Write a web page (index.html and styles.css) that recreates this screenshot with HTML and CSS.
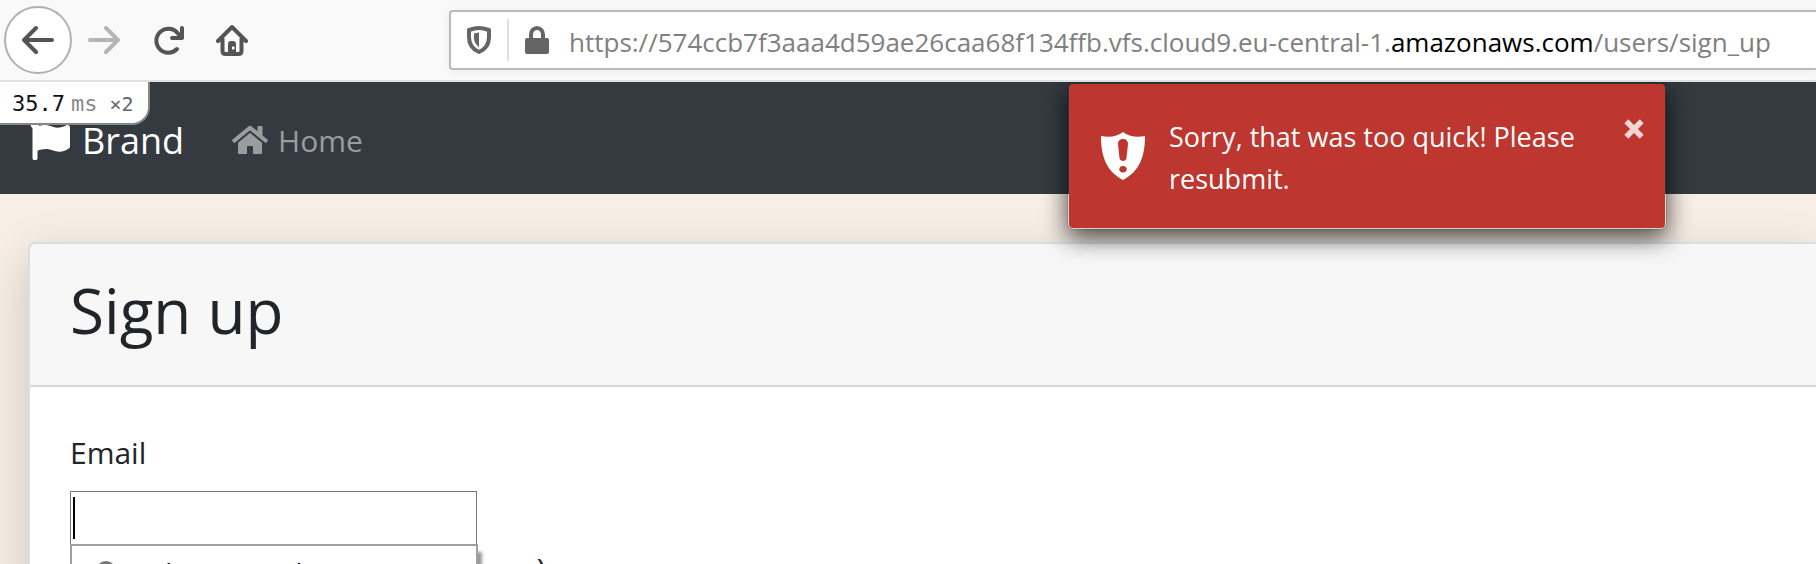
FILE: index.html
```html
<!DOCTYPE html>
<html lang="en">
<head>
<meta charset="utf-8">
<title>Sign up</title>
<link rel="stylesheet" href="styles.css">
</head>
<body>
<header class="toolbar">
  <nav class="toolbar-nav" aria-label="Browser">
    <button class="tool back" type="button" aria-label="Back"><svg viewBox="0 0 32 32"><path d="M30 16H2M14 4L2 16l12 12"/></svg></button>
    <button class="tool forward" type="button" aria-label="Forward" disabled><svg viewBox="0 0 32 32"><path d="M2 16h28M18 4l12 12-12 12"/></svg></button>
    <button class="tool" type="button" aria-label="Reload"><svg viewBox="0 0 32 32"><path d="M25 25A12 12 0 1 1 26 9.500L28 12M30 4v10H20"/></svg></button>
    <button class="tool" type="button" aria-label="Home"><svg viewBox="0 0 32 32"><path d="M2 17L16 3l14 14M6.500 15v12q0 3 3 3h13q3 0 3-3V15"/><path class="solid" fill-rule="evenodd" d="M12 30V20q0-3 3-3h2q3 0 3 3v10zM16 22.500v3h2.500v-3z"/></svg></button>
  </nav>
  <div class="address">
    <svg class="shield" viewBox="0 0 24 28"><path class="ring" d="M12 2C9 2 5 3 2 4v7c0 7 4 12.500 10 15 6-2.500 10-8 10-15V4c-3-1-7-2-10-2z"/><path d="M12 6.500L7 7.500V12c0 4 2 7 5 9z"/></svg>
    <span class="divider"></span>
    <svg class="lock" viewBox="0 0 24 28"><path class="ring" d="M6 14V8.500a6 6.500 0 0 1 12 0V14"/><rect y="12" width="24" height="16" rx="2"/></svg>
    <span class="url">https://574ccb7f3aaa4d59ae26caa68f134ffb.vfs.cloud9.eu-central-1.<b>amazonaws.com</b>/users/sign_up</span>
  </div>
</header>
<div class="page">
  <div class="profiler"><span class="time">35.7</span><span class="unit">ms</span><span class="count">×2</span></div>
  <nav class="navbar">
    <a class="brand" href="#"><svg viewBox="0 0 512 512"><path d="M350 99C296 99 252 64 184 64c-25 0-47 4-68 12a56 56 0 0 0 4-24C118 24 95 1 66 0 34-1 8 24 8 56c0 19 9 36 24 46v386a24 24 0 0 0 24 24h16a24 24 0 0 0 24-24v-94c28-12 64-22 114-22 54 0 98 34 166 34 48 0 87-16 122-41a32 32 0 0 0 14-26V96c0-23-24-39-45-29-35 16-77 32-117 32z"/></svg>Brand</a>
    <a class="nav-link" href="#"><svg viewBox="0 0 576 512"><path d="M280 148L96 300v164a16 16 0 0 0 16 16l112-1a16 16 0 0 0 16-16v-95a16 16 0 0 1 16-16h64a16 16 0 0 1 16 16v95a16 16 0 0 0 16 16l112 1a16 16 0 0 0 16-16V300L296 148a12 12 0 0 0-16 0zm292 103l-84-69V44a12 12 0 0 0-12-12h-56a12 12 0 0 0-12 12v72l-90-74a48 48 0 0 0-61 0L4 251a12 12 0 0 0-1 17l25 31a12 12 0 0 0 17 2l235-194a12 12 0 0 1 16 0l235 194a12 12 0 0 0 17-2l25-31a12 12 0 0 0-1-17z"/></svg>Home</a>
  </nav>
  <div class="toast" role="alert">
    <svg class="toast-icon" viewBox="0 0 44 48"><path fill-rule="evenodd" d="M22 0c-5 4-13 6-22 4 0 20 5 35 22 44C39 39 44 24 44 4 35 6 27 4 22 0zM22 7c-3 0-5 2-5 5l1.500 14c.3 4 6.700 4 7 0L27 12c0-3-2-5-5-5zM22 34c-5 0-5 6.500 0 6.500s5-6.500 0-6.500z"/></svg>
    <p class="toast-text">Sorry, that was too quick! Please resubmit.</p>
    <button class="toast-close" type="button" aria-label="Close"><svg viewBox="0 0 20 20"><path d="M3 3l14 14M17 3L3 17"/></svg></button>
  </div>
  <main class="card">
    <div class="card-header"><h1>Sign up</h1></div>
    <form class="card-body">
      <label for="email">Email</label>
      <div class="field">
        <input id="email" type="email">
        <span class="caret"></span>
        <div class="suggestions">
          <svg viewBox="0 0 24 24"><circle cx="12" cy="12" r="10"/></svg>
          <span>under Secured</span>
        </div>
      </div>
      <label for="password">Password (6 characters minimum)</label>
      <input id="password" type="password">
    </form>
  </main>
</div>
</body>
</html>
```
FILE: styles.css
```css
* { box-sizing: border-box; }
body {
  margin: 0;
  height: 100vh;
  overflow: hidden;
  display: flex;
  flex-direction: column;
  background: #f7eee5;
  color: #212529;
  font-family: "Segoe UI", "Open Sans", "Noto Sans", sans-serif;
}
.toolbar {
  flex: none;
  display: flex;
  align-items: center;
  height: 82px;
  padding-left: 4px;
  background: #f9f9fa;
  border-bottom: 2px solid #e0e0e1;
}
.toolbar-nav { flex: none; width: 445px; display: flex; align-items: center; }
.tool {
  width: 64px;
  height: 68px;
  padding: 0;
  display: grid;
  place-items: center;
  border: 0;
  background: none;
}
.tool svg {
  width: 32px;
  height: 32px;
  fill: none;
  stroke: #545456;
  stroke-width: 4;
  stroke-linecap: round;
  stroke-linejoin: round;
}
.tool .solid { fill: #545456; stroke: none; }
.back { width: 68px; border: 2px solid #b1b1b1; border-radius: 50%; background: #fff; }
.forward svg { stroke: #b5b5b6; }
.address {
  flex: 1;
  height: 60px;
  padding-left: 16px;
  display: flex;
  align-items: center;
  border: 2px solid #bababa;
  border-right: 0;
  border-radius: 4px 0 0 4px;
  background: #fff;
  box-shadow: 0 2px 8px rgba(0, 0, 0, .06);
}
.address svg { flex: none; width: 24px; height: 28px; fill: #656565; }
.address .ring { fill: none; stroke: #656565; stroke-width: 4; stroke-linejoin: round; }
.divider { width: 2px; height: 42px; margin: 0 16px; background: #e1e1e2; }
.url { margin-left: 20px; padding-top: 3px; font-size: 26px; color: #808080; white-space: nowrap; }
.url b { font-weight: 400; color: #000; }
.page { position: relative; flex: 1; min-height: 0; overflow: hidden; }
.profiler {
  position: absolute;
  top: 0;
  left: 0;
  width: 150px;
  height: 43px;
  padding-left: 12px;
  display: flex;
  align-items: baseline;
  line-height: 44px;
  background: #fff;
  border: solid #888;
  border-width: 0 2px 2px 0;
  border-radius: 0 0 18px 0;
  font-family: Consolas, "DejaVu Sans Mono", monospace;
  font-size: 22px;
  color: #111;
}
.unit { margin-left: 6px; color: #888; }
.count { margin-left: 12px; font-size: 20px; color: #666; }
.navbar {
  height: 112px;
  padding: 4px 30px 0;
  display: flex;
  align-items: center;
  gap: 48px;
  background: #343a40;
}
.navbar a { display: flex; align-items: center; text-decoration: none; }
.brand { gap: 12px; font-size: 36px; color: #fff; }
.brand svg { width: 40px; height: 40px; fill: #fff; }
.nav-link { gap: 10px; font-size: 30px; color: #9a9da0; }
.nav-link svg { width: 36px; height: 32px; fill: #9a9da0; }
.toast {
  position: absolute;
  z-index: 1;
  top: 0;
  right: 149px;
  width: 600px;
  padding: 32px 20px 28px 32px;
  display: flex;
  align-items: flex-start;
  background: #bd362f;
  background-clip: padding-box;
  border: 2px solid rgba(0, 0, 0, .1);
  border-radius: 6px;
  box-shadow: 0 8px 24px rgba(0, 0, 0, .7);
  color: #fff;
}
.toast-icon { flex: none; width: 44px; height: 48px; margin: 16px 24px 0 0; fill: #fff; }
.toast-text { flex: 1; margin: 0; font-size: 27px; line-height: 42px; }
.toast-close { flex: none; margin-top: 2px; padding: 0; border: 0; background: none; }
.toast-close svg { display: block; width: 22px; height: 22px; stroke: #f2d7d5; stroke-width: 5; }
.card {
  margin: 48px 0 0 28px;
  background: #fff;
  border: 2px solid #dcdddf;
  border-right: 0;
  border-radius: 8px 0 0 0;
  box-shadow: 0 16px 48px rgba(0, 0, 0, .18);
}
.card-header {
  height: 143px;
  padding: 22px 40px;
  background: #f7f7f7;
  border-bottom: 2px solid #d8d8d8;
  border-radius: 6px 0 0 0;
}
h1 { margin: 0; font-size: 62px; font-weight: 400; line-height: 88px; }
.card-body { padding: 42px 40px; }
label { display: block; font-size: 30px; line-height: 48px; }
.field { position: relative; width: 407px; margin: 14px 0 0; }
input { display: block; width: 407px; height: 54px; border: 1px solid #777; background: #fff; outline: 0; }
.caret { position: absolute; left: 3px; top: 6px; width: 2px; height: 42px; background: #000; }
.suggestions {
  position: absolute;
  top: 53px;
  left: 0;
  width: 408px;
  height: 64px;
  padding: 12px 24px;
  display: flex;
  gap: 8px;
  background: #fff;
  border: 2px solid #a0a0a0;
  box-shadow: 4px 8px 3px rgba(0, 0, 0, .4);
  font-size: 26px;
  line-height: 28px;
  color: #000;
}
.suggestions svg { width: 20px; height: 20px; margin-top: 3px; fill: none; stroke: #777; stroke-width: 4; }
```
